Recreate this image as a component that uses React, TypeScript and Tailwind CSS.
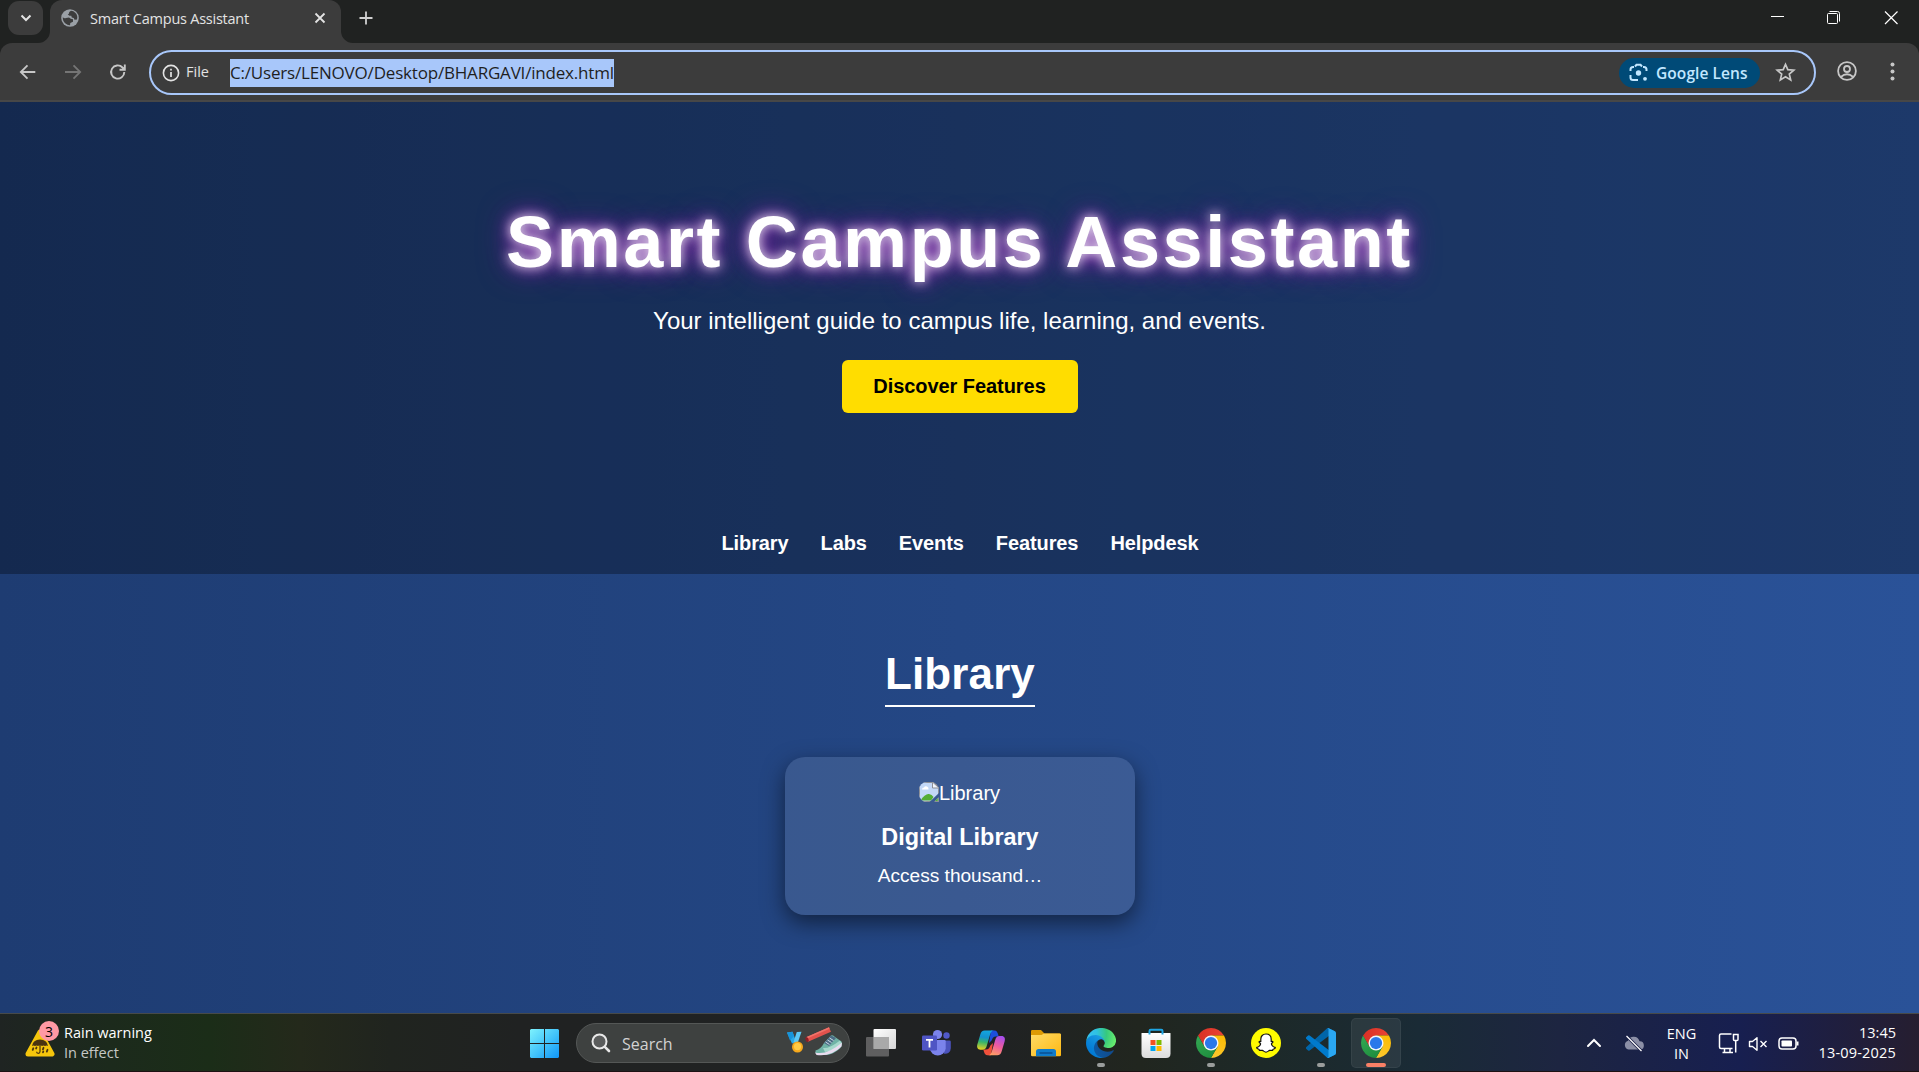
import React from "react";

const ui = "font-['Open_Sans','Noto_Sans',sans-serif]";

function ChromeLogo({ id }: { id: string }) {
  return (
    <svg width="30" height="30" viewBox="0 0 48 48">
      <defs>
        <linearGradient id={id + "r"} x1="3" y1="15" x2="45" y2="15" gradientUnits="userSpaceOnUse"><stop stopColor="#d93025" /><stop offset="1" stopColor="#ea4335" /></linearGradient>
        <linearGradient id={id + "y"} x1="21" y1="48" x2="42" y2="12" gradientUnits="userSpaceOnUse"><stop stopColor="#fcc934" /><stop offset="1" stopColor="#fbbc04" /></linearGradient>
        <linearGradient id={id + "g"} x1="26" y1="46" x2="6" y2="10" gradientUnits="userSpaceOnUse"><stop stopColor="#1e8e3e" /><stop offset="1" stopColor="#34a853" /></linearGradient>
      </defs>
      <path fill={`url(#${id}r)`} d="M3.22 12A24 24 0 0 1 44.78 12L24 12L13.6 30Z" />
      <path fill={`url(#${id}y)`} d="M44.78 12A24 24 0 0 1 24 48L34.4 30L24 12Z" />
      <path fill={`url(#${id}g)`} d="M24 48A24 24 0 0 1 3.22 12L13.6 30L34.4 30Z" />
      <circle cx="24" cy="24" r="12" fill="#f4f6fb" />
      <circle cx="24" cy="24" r="9.8" fill="#2a78ea" />
    </svg>
  );
}

function TaskViewIcon() {
  return (
    <svg width="30" height="30" viewBox="0 0 30 30">
      <defs><linearGradient id="tv" x1="0" y1="0" x2="1" y2="1"><stop stopColor="#fff" /><stop offset="1" stopColor="#d6d6d6" /></linearGradient></defs>
      <rect x="7.5" y="1" width="22.5" height="20" rx="1" fill="url(#tv)" />
      <rect x="0" y="9" width="23" height="19.5" rx="1" fill="#6f6f6f" opacity=".8" />
      <path d="M7.500 9H23V21H7.500Z" fill="#a9a9a9" />
    </svg>
  );
}

function TeamsIcon() {
  return (
    <svg width="30" height="30" viewBox="0 0 30 30">
      <circle cx="25.500" cy="7.500" r="3.200" fill="#5059c9" />
      <path d="M19 12.500h9.500a1.300 1.300 0 0 1 1.300 1.300v6.500a5.500 5.500 0 0 1-7 5.300z" fill="#4b53bc" />
      <circle cx="16.500" cy="6.500" r="4.600" fill="#7b83eb" />
      <path d="M10 12h13.500a1.200 1.200 0 0 1 1.200 1.200v7.300a8 8 0 0 1-15.900 0z" fill="#7b83eb" />
      <rect x="1" y="7.500" width="15" height="15" rx="1.300" fill="#4f55c4" />
      <path d="M5 11.800H12M8.500 11.800V19.500" stroke="#fff" strokeWidth="1.800" />
    </svg>
  );
}

function CopilotIcon() {
  return (
    <svg width="30" height="28" viewBox="0 0 30 28">
      <defs>
        <linearGradient id="cpa" x1="8" y1="1" x2="5" y2="21" gradientUnits="userSpaceOnUse"><stop stopColor="#14a7e0" /><stop offset=".35" stopColor="#1391cf" /><stop offset=".6" stopColor="#37b56b" /><stop offset="1" stopColor="#f3d21c" /></linearGradient>
        <linearGradient id="cpb" x1="25" y1="7" x2="17" y2="27" gradientUnits="userSpaceOnUse"><stop stopColor="#a44df0" /><stop offset=".5" stopColor="#ee5c9d" /><stop offset="1" stopColor="#ffa45e" /></linearGradient>
      </defs>
      <path d="M15 1.500h3.500c2 0 2.900 1.600 3.500 3.600l.7 2.400H20c-2.500 0-3.500 1.500-4.200 3.800L13 14z" fill="#1b4fdc" />
      <path d="M15 26.300h-3.500c-2 0-2.900-1.600-3.500-3.600l-.7-2.200H10c2.500 0 3.500-1.500 4.200-3.800L17 14z" fill="#f0503b" />
      <path d="M8.800 1.500H18c-2.200 0-3.200 1.700-3.900 4l-3.300 11.200c-.7 2.400-1.900 4-4.500 4H4.400C1.600 20.700.500 18.400 1.400 15.300L4.300 5.500C5 3 6.300 1.500 8.800 1.500z" fill="url(#cpa)" />
      <path d="M21.200 26.300H12c2.200 0 3.200-1.700 3.900-4l3.300-11.200c.7-2.400 1.900-4 4.500-4h1.900c2.800 0 3.900 2.300 3 5.400l-2.900 9.800c-.7 2.500-2 4-4.500 4z" fill="url(#cpb)" />
    </svg>
  );
}

function FolderIcon() {
  return (
    <svg width="30" height="28" viewBox="0 0 30 28">
      <defs><linearGradient id="fo" x1="0" y1="0" x2="1" y2="1"><stop stopColor="#ffdb66" /><stop offset="1" stopColor="#fdb813" /></linearGradient></defs>
      <path d="M0 2.300Q0 1 1.300 1H10l3.500 3.500H28.500Q30 4.500 30 6v5H0Z" fill="#dd9a04" />
      <path d="M0 6H10.500L13 4.500H28.700Q30 4.500 30 5.800V26Q30 27.300 28.700 27.300H1.300Q0 27.300 0 26Z" fill="url(#fo)" />
      <path d="M5 27.300V22.500Q5 20 7.500 20H22.500Q25 20 25 22.500V27.300Z" fill="#0f7ccb" />
      <path d="M9 24H21" stroke="#0a4f92" strokeWidth="1.300" strokeLinecap="round" />
    </svg>
  );
}

function EdgeIcon() {
  return (
    <svg width="30" height="30" viewBox="0 0 256 256">
      <defs>
        <linearGradient id="e1" x1="63" y1="178" x2="241" y2="178" gradientUnits="userSpaceOnUse"><stop stopColor="#0c59a4" /><stop offset="1" stopColor="#114a8b" /></linearGradient>
        <linearGradient id="e2" x1="158" y1="101" x2="46" y2="240" gradientUnits="userSpaceOnUse"><stop stopColor="#1b9de2" /><stop offset=".16" stopColor="#1595df" /><stop offset=".67" stopColor="#0680d7" /><stop offset="1" stopColor="#0078d4" /></linearGradient>
        <radialGradient id="e3" cx="26" cy="47" r="230" gradientUnits="userSpaceOnUse"><stop stopColor="#35c1f1" /><stop offset=".3" stopColor="#2fc2e0" /><stop offset=".65" stopColor="#36c97e" /><stop offset="1" stopColor="#66eb6e" /></radialGradient>
      </defs>
      <path fill="url(#e1)" d="M231 190.500c-3.400 1.800-6.900 3.400-10.500 4.700-11.500 4.300-23.600 6.500-35.900 6.500-47.300 0-88.500-32.500-88.500-74.300.1-11.400 6.400-21.900 16.400-27.300-42.800 1.800-53.800 46.400-53.800 72.500 0 73.900 68.100 81.400 82.800 81.400 7.900 0 19.800-2.300 27-4.600l1.300-.4a128.300 128.300 0 0 0 66.600-52.800c1.200-1.900.6-4.300-1.200-5.500-1.300-.8-2.900-.9-4.200-.2z" />
      <path fill="url(#e2)" d="M105.700 241.400A79.200 79.200 0 0 1 83 220.100a80.700 80.700 0 0 1 29.500-120c3.100-1.500 8.500-4.200 15.600-4.100 10.200.1 19.700 4.900 25.800 13 4 5.400 6.300 11.900 6.400 18.700 0-.2 24.500-79.600-80-79.600-43.900 0-80 41.700-80 78.200-.2 19.300 4 38.500 12.100 56a128 128 0 0 0 156.400 67.100 75.500 75.500 0 0 1-63.100-8z" />
      <path fill="url(#e3)" d="M152.300 148.900c-.8 1-3.300 2.500-3.300 5.700 0 2.600 1.700 5.200 4.800 7.300 14.400 10.100 41.700 8.700 41.800 8.700 10.700 0 21.300-2.900 30.500-8.400A61.900 61.900 0 0 0 256.500 109c.3-22.400-8-37.300-11.300-43.900C224 23.500 178.200-.500 128.500-.500A128 128 0 0 0 .500 125.700C1 89.200 37.200 59.700 80.500 59.700c3.500 0 23.500.3 42 10 16.300 8.600 24.900 19 30.800 29.200 6.200 10.700 7.300 24.100 7.300 29.500 0 5.300-2.700 13.300-8.300 20.500z" />
    </svg>
  );
}

function StoreIcon() {
  return (
    <svg width="30" height="30" viewBox="0 0 30 30">
      <defs><linearGradient id="st" x1="0" y1="0" x2="0" y2="1"><stop stopColor="#fff" /><stop offset="1" stopColor="#dcdcdc" /></linearGradient></defs>
      <path d="M8.500 7V3Q8.500 1.800 9.700 1.800H20.300Q21.500 1.800 21.500 3V7" fill="none" stroke="#1fa6e4" strokeWidth="2" />
      <path d="M.5 5.500Q.5 5 1 5H29Q29.500 5 29.500 5.500V25.500Q29.500 30 25 30H5Q.5 30 .5 25.500Z" fill="url(#st)" />
      <path d="M8.500 5V6.500M21.500 5V6.500" stroke="#1fa6e4" strokeWidth="2" />
      <path fill="#f25022" d="M9.500 12h5v5h-5z" /><path fill="#7fba00" d="M15.500 12h5v5h-5z" />
      <path fill="#00a4ef" d="M9.500 18h5v5h-5z" /><path fill="#ffb900" d="M15.500 18h5v5h-5z" />
    </svg>
  );
}

function SnapIcon() {
  return (
    <svg width="30" height="30" viewBox="0 0 30 30">
      <circle cx="15" cy="15" r="15" fill="#fffc00" />
      <path d="M15 6c3.300 0 5.200 2.300 5.200 5.200v2.300c.5.200 1.400-.4 1.700.3.300.8-1.400 1.200-1.500 1.900 0 1.200 1.600 3.200 3.600 3.700.5.200.3.900-.2 1.200-.6.400-1.500.4-1.800.7-.3.300-.1 1-.6 1.100-.7.200-1.700-.3-2.800 0-1.200.4-1.900 1.700-3.600 1.700s-2.400-1.300-3.600-1.700c-1.100-.3-2.100.2-2.800 0-.5-.1-.3-.8-.6-1.100-.3-.3-1.200-.3-1.800-.7-.5-.3-.7-1-.2-1.200 2-.5 3.600-2.500 3.600-3.700-.1-.7-1.800-1.100-1.500-1.900.3-.7 1.200-.1 1.700-.3v-2.300C9.800 8.300 11.700 6 15 6z" fill="#fff" stroke="#111" strokeWidth="1.200" />
    </svg>
  );
}

function CodeIcon() {
  return (
    <svg width="30" height="30" viewBox="0 0 100 100">
      <path fill="#0065a9" d="M96.500 10.800 75.900.9a6.200 6.200 0 0 0-7.100 1.200L1.300 63.600a4.200 4.200 0 0 0 0 6.200l5.500 5a4.200 4.200 0 0 0 5.300.2l81.200-61.600c2.700-2.100 6.700-.1 6.700 3.300v-.3c0-2.300-1.400-4.500-3.500-5.600z" />
      <path fill="#007acc" d="m96.500 89.200-20.600 9.900a6.200 6.200 0 0 1-7.100-1.200L1.300 36.400a4.200 4.200 0 0 1 0-6.200l5.500-5a4.200 4.200 0 0 1 5.300-.2l81.200 61.600c2.700 2.100 6.700.1 6.700-3.300v.3c0 2.300-1.400 4.500-3.500 5.600z" />
      <path fill="#2aa7f2" d="M75.900 99.100a6.200 6.200 0 0 1-7.100-1.200c2.300 2.300 6.200.7 6.200-2.600V4.700c0-3.300-3.900-4.900-6.200-2.600A6.200 6.200 0 0 1 75.900.9l20.600 9.900c2.100 1.100 3.500 3.200 3.500 5.600v67.200c0 2.400-1.400 4.600-3.500 5.600z" />
    </svg>
  );
}

function SearchArt() {
  return (
    <svg className="overflow-visible" width="58" height="28" viewBox="0 0 58 28">
      <path d="M0 1.500 5.500.8 9.500 11.500 5 12.500Z" fill="#2aa9e8" />
      <path d="M14.500.8 9.800 1 6.500 11 10.500 12.500Z" fill="#5cc8f5" />
      <path d="M0 1.500 5.500.8 7 5 3 9.500Z" fill="#1794da" />
      <circle cx="10.500" cy="16" r="5.500" fill="#f6a81c" />
      <circle cx="10.500" cy="15.600" r="3.600" fill="#ffcb45" />
      <path d="M20 8.500 43 -1.500" stroke="#e2524c" strokeWidth="5" />
      <path d="M19.300 7 42.300 -3" stroke="#f0736a" strokeWidth="1.500" />
      <ellipse cx="20" cy="8.500" rx="1.500" ry="2.600" transform="rotate(-25 20 8.500)" fill="#8c1f26" />
      <path d="M28.500 19.500Q34 18 37 12L44 4.500Q46 3.500 48 6L54.500 10.500Q56 14 53 17.500Q46 23.500 39 24Q31 24.500 28.500 22Z" fill="#6fb3a6" />
      <path d="M37 12 44 4.500 49 7 42 15Z" fill="#4c6c85" />
      <path d="M36 17Q42 18 53 9.500L54.500 12Q48 20 38 21Z" fill="#a5d8cb" />
      <path d="M28 21.500Q40 24.500 55 11.500L54.500 15.500Q44 26 29.500 24Z" fill="#e9dcef" />
      <path d="M38.500 11 42.500 13.500M40.500 9 44.500 11.500M42.500 7 46.500 9.500" stroke="#dbe9f0" strokeWidth=".9" />
    </svg>
  );
}

function TaskCell({ children, indicator, active }: { children: React.ReactNode; indicator?: boolean; active?: boolean }) {
  return (
    <div className="flex w-[55px] justify-center">
      <div className={`relative mt-[4px] flex h-[50px] w-[50px] items-center justify-center rounded-[5px] ${active ? "border border-white/5 bg-white/7" : ""}`}>
        {children}
        {indicator && <span className="absolute bottom-[1px] left-[21px] h-1 w-2 rounded-full bg-[#9a9d9c]" />}
        {active && <span className="absolute bottom-0 left-[14px] h-1 w-5 rounded-full bg-[#f98066]" />}
      </div>
    </div>
  );
}

function BrowserChrome() {
  return (
    <header className={`h-[102px] shrink-0 bg-[#202221] text-[#e3e3e3] ${ui}`}>
      <div className="flex h-[43px]">
        <div className="ml-2 mt-[1px] flex h-[34px] w-[35px] items-center justify-center rounded-[11px] bg-[#3c3c3c]">
          <svg width="12" height="8" viewBox="0 0 12 8"><path d="M1.500 1.500 6 6 10.500 1.500" fill="none" stroke="#e3e3e3" strokeWidth="2" /></svg>
        </div>
        <div className="relative ml-[7px] flex h-[43px] w-[291px] items-center rounded-t-[12px] bg-[#3c3c3c]">
          <svg className="absolute bottom-0 -left-3" width="12" height="12"><path d="M12 0V12H0A12 12 0 0 0 12 0" fill="#3c3c3c" /></svg>
          <svg className="absolute -right-3 bottom-0" width="12" height="12"><path d="M0 0V12H12A12 12 0 0 1 0 0" fill="#3c3c3c" /></svg>
          <svg className="mb-[7px] ml-[11px]" width="18" height="18" viewBox="0 0 18 18">
            <circle cx="9" cy="9" r="8.800" fill="#9aa0a6" />
            <path d="M1.800 8.300Q1.500 12 4.500 14.500Q6.500 16.300 9 16.200L9.300 14L12 12.800V10.300L9.800 9.800L8 8.500L5 9Q3.500 10 1.800 8.300Z M10 1.800Q7.500 3 8 4.500L6.800 5.500L8.500 6.800H10.300L10.800 8.600L12.800 9L13.500 10.800L16 10.500Q17 6.500 14.500 4Q12.500 1.900 10 1.800Z" fill="#3c3c3c" />
          </svg>
          <span className="mb-[6px] ml-[11px] text-[14.500px] tracking-[-0.240px] whitespace-nowrap">Smart Campus Assistant</span>
          <svg className="absolute top-[12px] left-[264px]" width="12" height="12" viewBox="0 0 12 12"><path d="M1.500 1.500 10.500 10.500M10.500 1.500 1.500 10.500" stroke="#e3e3e3" strokeWidth="1.800" /></svg>
        </div>
        <svg className="mt-[10px] ml-[17px]" width="16" height="16" viewBox="0 0 16 16"><path d="M8 1.500V14.500M1.500 8H14.500" stroke="#d0d0d0" strokeWidth="1.800" /></svg>
        <div className="mt-[10px] mr-[20px] ml-auto flex">
          <svg width="15" height="15" viewBox="0 0 15 15"><path d="M1 6.500H14" stroke="#fff" /></svg>
          <svg className="mr-[43px] ml-[41px]" width="15" height="15" viewBox="0 0 15 15" fill="none" stroke="#fff"><rect x="1.500" y="3.500" width="10" height="10" rx="1" /><path d="M3.500 1.500H11.500Q13.500 1.500 13.500 3.500V11.500" /></svg>
          <svg width="15" height="15" viewBox="0 0 15 15"><path d="M1 1.500 13.500 14M13.500 1.500 1 14" stroke="#fff" strokeWidth="1.200" /></svg>
        </div>
      </div>
      <div className="flex h-[59px] rounded-t-[12px] border-b-2 border-[#474747] bg-[#3c3c3c] pt-[7px]">
        <div className="ml-[19px] flex h-[43px] w-[130px] gap-[27px] pt-[13px]">
          <svg width="18" height="18" viewBox="0 0 18 18"><path d="M16.300 9H2M8.500 2.300 1.800 9 8.500 15.700" fill="none" stroke="#c7c7c7" strokeWidth="1.800" /></svg>
          <svg width="18" height="18" viewBox="0 0 18 18"><path d="M1 9H16M9.500 2.300 16.200 9 9.500 15.700" fill="none" stroke="#757575" strokeWidth="1.800" /></svg>
          <svg width="18" height="18" viewBox="0 0 18 18"><path d="M15.300 9A6.600 6.600 0 1 1 13.500 4.500L15.300 6.300M15.800 1.500V6.800H10.500" fill="none" stroke="#c7c7c7" strokeWidth="1.900" /></svg>
        </div>
        <div className="flex h-[45px] w-[1667px] items-center rounded-full border-[2.500px] border-[#a8c7fa] pl-[11px]">
          <svg width="18" height="18" viewBox="0 0 18 18"><circle cx="9" cy="9" r="7.600" fill="none" stroke="#e3e3e3" strokeWidth="1.600" /><path d="M9 8V13M9 4.800V6.500" stroke="#e3e3e3" strokeWidth="1.700" /></svg>
          <span className="mb-[1px] ml-[6px] w-[44px] text-[14.500px] font-medium">File</span>
          <span className="h-[28px] bg-[#a8c7fa] text-[17px] leading-[28px] tracking-[-0.190px] whitespace-nowrap text-[#1f1f1f]">C:/Users/LENOVO/Desktop/BHARGAVI/index.html</span>
          <div className="ml-auto flex h-[30px] w-[141px] items-center rounded-full bg-[#004a77] pl-[10px] text-[#c2e7ff]">
            <svg width="19" height="19" viewBox="0 0 19 19" fill="none" stroke="#c2e7ff" strokeWidth="2"><path d="M1.500 8V6.500Q1.500 4 4 4H5M14 4H15Q17.500 4 17.500 6.500V8M1.500 12V14.500Q1.500 17 4 17H9" /><path d="M6 3.500 7.500 1.800H11.500L13 3.500" /><circle cx="9.500" cy="10" r="2.700" fill="#c2e7ff" stroke="none" /><circle cx="16" cy="15.800" r="1.900" fill="#c2e7ff" stroke="none" /></svg>
            <span className="mt-[2px] ml-[8px] text-[15.500px] font-semibold tracking-[0.080px] whitespace-nowrap">Google Lens</span>
          </div>
          <svg className="mr-[18px] ml-[15px]" width="21" height="21" viewBox="0 0 21 21"><path d="M10.500 2.300 12.800 7.700 18.800 8.200 14.300 12.100 15.700 17.900 10.500 14.800 5.300 17.900 6.700 12.100 2.200 8.200 8.200 7.700Z" fill="none" stroke="#c7c7c7" strokeWidth="1.700" /></svg>
        </div>
        <svg className="mt-[11px] ml-[21px]" width="20" height="20" viewBox="0 0 20 20" fill="none" stroke="#c7c7c7" strokeWidth="1.800"><circle cx="10" cy="10" r="8.900" /><circle cx="10" cy="8" r="3" /><path d="M3.800 16Q10 10.500 16.200 16" /></svg>
        <svg className="mt-[12px] ml-[33px]" width="6" height="20" viewBox="0 0 6 20" fill="#c7c7c7"><circle cx="2.500" cy="2.500" r="2" /><circle cx="2.500" cy="9.500" r="2" /><circle cx="2.500" cy="16.600" r="2" /></svg>
      </div>
    </header>
  );
}

function BrokenImage() {
  return (
    <svg className="overflow-hidden rounded-l-[8px] rounded-tr-[8px]" width="20" height="20" viewBox="0 0 20 20">
      <path d="M0 0H14L20 6V20H0Z" fill="#c3d8f7" />
      <path d="M0 0H14L20 6V20H0Z" fill="none" stroke="#8d8f96" strokeWidth="2" />
      <path d="M3 7.500Q3 5.500 5 5.500Q6 3.500 8 4.500Q10 5.500 9.500 7.500Z" fill="#fff" />
      <path d="M1.500 18.500Q6 11.500 10 12Q13 12.500 14.500 15L12 18.500Z" fill="#55ad35" />
      <path d="M10.500 20 20 11V15L15 20Z" fill="#3a5a92" />
      <path d="M16 19 18.800 16V19Z" fill="#55ad35" />
      <path d="M13.500 0V6H20Z" fill="#f3f6fc" stroke="#8d8f96" />
    </svg>
  );
}

function Page() {
  const links = ["Library", "Labs", "Events", "Features", "Helpdesk"];
  return (
    <main className="flex h-[911px] shrink-0 flex-col font-['Liberation_Sans',Arial,sans-serif] text-white [background-image:linear-gradient(to_right,#1e3c72,#2a5298)]">
      <section className="flex h-[472px] flex-col items-center bg-black/30">
        <h1 className="mt-[99px] h-[82px] text-[72px] leading-[82px] font-bold tracking-[2.600px] whitespace-nowrap [text-shadow:0_0_12px_rgba(255,255,255,0.9),0_0_20px_#9327b8,0_0_32px_#6a1b9a]">Smart Campus Assistant</h1>
        <p className="mt-[24px] text-[24px] leading-[28px] whitespace-nowrap">Your intelligent guide to campus life, learning, and events.</p>
        <button className="mt-[25px] h-[53px] w-[236px] rounded-[6px] bg-[#ffdd00] pb-[2px] text-[20px] font-bold tracking-[-0.060px] text-black">Discover Features</button>
        <nav className="mt-[119px] ml-[1px] flex gap-8 text-[20px] leading-[23px] font-bold tracking-[-0.100px]">
          {links.map((l) => <a key={l} href="#top">{l}</a>)}
        </nav>
      </section>
      <section className="flex flex-col items-center">
        <h2 className="mt-[73px] ml-[1px] h-[60px] border-b-2 border-white text-[44px] leading-[54px] font-bold tracking-[0.100px]">Library</h2>
        <article className="mt-[50px] flex h-[158px] w-[350px] flex-col items-center rounded-[20px] bg-white/10 shadow-[0_8px_22px_rgba(0,0,0,0.5)]">
          <div className="mt-[25px] flex h-[23px] text-[20px] leading-[23px]"><BrokenImage /><span>Library</span></div>
          <h3 className="mt-[19px] ml-[1px] text-[23.400px] leading-[27px] font-bold">Digital Library</h3>
          <p className="mt-[14px] ml-[1px] text-[19.100px] leading-[22px]">Access thousand…</p>
        </article>
      </section>
    </main>
  );
}

function Taskbar() {
  return (
    <footer className={`grid h-[59px] shrink-0 grid-cols-[576px_827px_1fr] border-t border-t-[#474a49] border-b border-b-[#1d1113] text-white ${ui} [background-image:linear-gradient(to_right,#1f2422_0px,#1c2a1c_110px,#1b2d18_210px,#24291b_300px,#20241f_390px,#202222_520px,#202223_1000px,#21261f_1140px,#1d2928_1260px,#1a2b36_1420px,#1d2541_1560px,#171f50_1740px,#261e30_1919px)]`}>
      <div className="flex">
        <div className="relative ml-[25px] w-[39px] pt-[15px]">
          <svg width="30" height="28" viewBox="0 0 30 28">
            <path d="M15 3 27 25H3Z" fill="#f5c60c" stroke="#f5c60c" strokeWidth="5" strokeLinejoin="round" />
            <path d="M7 17Q8 10.500 15 10.500T23 17Q21.500 15.800 20 17Q18.500 15.800 17 17Q15 15.500 13 17Q11.500 15.800 10 17Q8.500 15.800 7 17Z" fill="#4a3410" />
            <path d="M15 15V22.500Q15 24.300 13.300 24.300T11.600 22.800" fill="none" stroke="#4a3410" strokeWidth="1.200" />
            <path d="M8.300 19.300l-.6 1.500M11.500 18.500l-.4 1M18.500 18.800l-.6 1.500M22.500 20.800l-.7 1.800M18.300 22.500l-.3.800" stroke="#4a3410" strokeWidth="1.800" strokeLinecap="round" />
          </svg>
          <span className="absolute top-[7px] left-[14px] flex h-5 w-5 items-center justify-center rounded-full bg-[#ff99a4] text-[14px] text-black">3</span>
        </div>
        <div className="pt-[9px] text-[14.500px] leading-[20px] whitespace-nowrap">
          <div>Rain warning</div>
          <div className="text-[#c5c8c5]">In effect</div>
        </div>
        <svg className="mt-[15px] mr-[17px] ml-auto" width="29" height="29" viewBox="0 0 29 29">
          <defs><linearGradient id="win" x1="0" y1="0" x2="29" y2="29" gradientUnits="userSpaceOnUse"><stop stopColor="#7ef2fd" /><stop offset=".5" stopColor="#45c6fb" /><stop offset="1" stopColor="#1096f8" /></linearGradient></defs>
          <path d="M1 0H14V14H0V1ZM15 0H28L29 1V14H15ZM0 15H14V29H1L0 28ZM15 15H29V28L28 29H15Z" fill="url(#win)" />
        </svg>
      </div>
      <div className="flex">
        <div className="mt-[9px] flex h-[40px] w-[275px] items-center rounded-full border border-[#545756] bg-[#3e4140] pl-[14px]">
          <svg width="20" height="20" viewBox="0 0 20 20" fill="none" stroke="#e8e8e8"><circle cx="8.500" cy="8.500" r="7" strokeWidth="2" fill="#5a5c5c" /><path d="M13.800 13.800 18 18" strokeWidth="2.600" strokeLinecap="round" /></svg>
          <span className="mt-[1px] ml-[11px] text-[16px] text-[#d2d2d2]">Search</span>
          <div className="mt-[4px] mr-[4px] ml-auto"><SearchArt /></div>
        </div>
        <div className="flex pl-[3px]">
          <TaskCell><TaskViewIcon /></TaskCell>
          <TaskCell><TeamsIcon /></TaskCell>
          <TaskCell><CopilotIcon /></TaskCell>
          <TaskCell><FolderIcon /></TaskCell>
          <TaskCell indicator><EdgeIcon /></TaskCell>
          <TaskCell><StoreIcon /></TaskCell>
          <TaskCell indicator><ChromeLogo id="ca" /></TaskCell>
          <TaskCell><SnapIcon /></TaskCell>
          <TaskCell indicator><CodeIcon /></TaskCell>
          <TaskCell active><ChromeLogo id="cb" /></TaskCell>
        </div>
      </div>
      <div className="flex justify-end text-[14.500px] leading-[20px]">
        <svg className="mt-[23px] mr-[21px]" width="16" height="12" viewBox="0 0 16 12"><path d="M2 9 8 3 14 9" fill="none" stroke="#fff" strokeWidth="2" strokeLinecap="round" /></svg>
        <svg className="mt-[20px] mr-[22px]" width="22" height="18" viewBox="0 0 22 18"><path d="M5.500 15.500A4.500 4.500 0 0 1 5 6.800A6 6 0 0 1 16.500 7.300A4 4 0 0 1 17 15.500Z" fill="#8b8fa6" /><path d="M3 1.500 19 17.500" stroke="#1b2148" strokeWidth="3" /><path d="M3.500 2 18.500 17" stroke="#fff" strokeWidth="1.300" /></svg>
        <div className="mr-[21px] w-[30px] pt-[10px] text-center"><div>ENG</div><div>IN</div></div>
        <svg className="mt-[18px] mr-[8px]" width="22" height="23" viewBox="0 0 22 23" fill="none" stroke="#fff" strokeWidth="1.500"><path d="M13.500 2H3Q1.500 2 1.500 3.500V15Q1.500 16.500 3 16.500H14.500M6.500 16.500V20.500M12 16.500V20.500M4.500 20.500H15M15.500 2.500H20V7.500Q20 8.500 19 8.500H16.500Q15.500 8.500 15.500 7.500ZM17.700 8.500V20.500" /></svg>
        <svg className="mt-[22px] mr-[9px]" width="21" height="16" viewBox="0 0 21 16" fill="none" stroke="#fff" strokeWidth="1.400"><path d="M1.500 5.500H4.500L9 1.800V14.200L4.500 10.500H1.500Z" strokeLinejoin="round" /><path d="M12.500 5 18.500 11M18.500 5 12.500 11" /></svg>
        <svg className="mt-[23px] mr-[19px]" width="22" height="13" viewBox="0 0 22 13"><rect x="1" y="1" width="17" height="11" rx="3" fill="none" stroke="#fff" strokeWidth="1.500" /><rect x="3.500" y="3.500" width="10.500" height="6" rx=".8" fill="#fff" /><path d="M19.500 4.500V8.500" stroke="#fff" strokeWidth="2" /></svg>
        <div className="mr-[23px] pt-[9px] text-right whitespace-nowrap"><div>13:45</div><div className="tracking-[0.180px]">13-09-2025</div></div>
      </div>
    </footer>
  );
}

export default function App() {
  return (
    <div className="flex h-[1072px] w-[1919px] flex-col overflow-hidden">
      <BrowserChrome />
      <Page />
      <Taskbar />
    </div>
  );
}
